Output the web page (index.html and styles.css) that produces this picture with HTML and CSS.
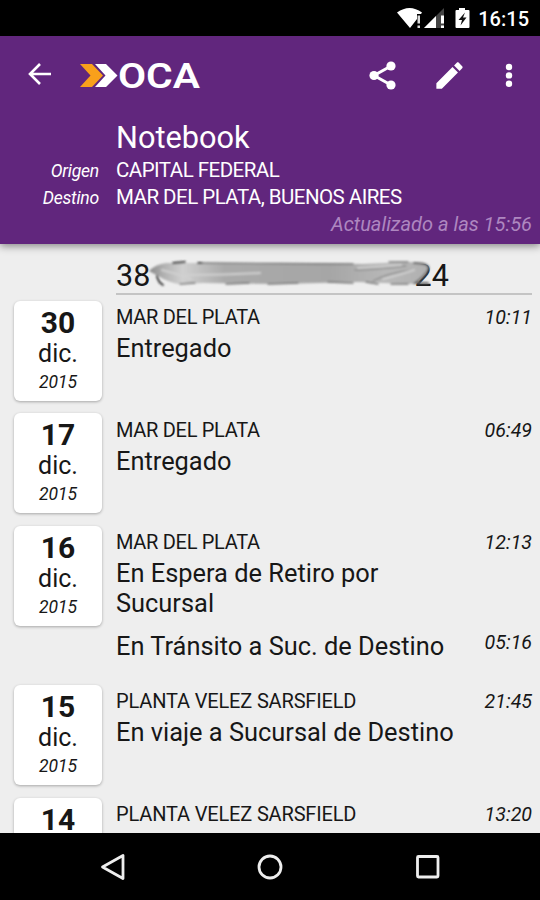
FILE: index.html
```html
<!DOCTYPE html>
<html lang="es">
<head>
<meta charset="utf-8">
<title>OCA</title>
<link rel="stylesheet" href="styles.css">
</head>
<body>
<div class="phone">
  <div class="status">
    <svg class="signals" width="76" height="36" viewBox="0 0 76 36">
      <path d="M0 12.500Q12.500 3.500 25 12.500L24 14H20V19L13 28Z" fill="#fff"/>
      <path d="M20.500 15.500h2.500v8h-2.500zM20.500 25.500h2.500v2.500h-2.500z" fill="#ddd"/>
      <path d="M27 28L47 8V28Z" fill="#444"/>
      <path d="M27 28L39 16V28Z" fill="#fff"/>
      <path d="M44 15.500h3v8h-3zM44 25.500h3v2.500h-3z" fill="#fff"/>
      <path d="M62 8h6v2h3.500q1 0 1 1v16q0 1-1 1h-12q-1 0-1-1V11q0-1 1-1H62Z" fill="#fff"/>
      <path d="M68 12.500L61.500 20H65L63.500 25.500L69.500 17.500H66Z" fill="#111"/>
    </svg>
    <span class="clock">16:15</span>
  </div>
  <header class="header">
    <div class="toolbar">
      <svg class="back" width="26" height="26" viewBox="0 0 26 26" fill="none" stroke="#fff" stroke-width="2.600"><path d="M25 13H4M14 3L4 13L14 23"/></svg>
      <svg class="logo" width="124" height="34" viewBox="0 0 124 34">
        <path d="M1 5H13L24 16.500L13 28H1L11.500 16.500Z" fill="#f9a01b"/>
        <path d="M16 5H27L38.500 16.500L27 28H16L26.500 16.500Z" fill="#fff"/>
        <text class="logo-text" x="39" y="29" textLength="82" lengthAdjust="spacingAndGlyphs">OCA</text>
      </svg>
      <svg class="share" width="30" height="32" viewBox="0 0 30 32"><path d="M23 6L6 15.500L23 25" fill="none" stroke="#fff" stroke-width="3"/><g fill="#fff"><circle cx="23" cy="6" r="4.600"/><circle cx="6" cy="15.500" r="4.600"/><circle cx="23" cy="25" r="4.600"/></g></svg>
      <svg class="edit" width="35" height="35" viewBox="0 0 24 24" fill="#fff"><path d="M3 17.250V21h3.750L17.810 9.940l-3.750-3.750L3 17.250zM20.710 7.040c.390-.390.390-1.020 0-1.410l-2.340-2.340c-.390-.390-1.020-.390-1.410 0l-1.830 1.830 3.750 3.750 1.830-1.830z"/></svg>
      <svg class="more" width="8" height="28" viewBox="0 0 8 28" fill="#fff"><circle cx="4" cy="5" r="3.200"/><circle cx="4" cy="13.400" r="3.200"/><circle cx="4" cy="21.800" r="3.200"/></svg>
    </div>
    <h1 class="title">Notebook</h1>
    <dl class="route">
      <dt>Origen</dt><dd>CAPITAL FEDERAL</dd>
      <dt>Destino</dt><dd>MAR DEL PLATA, BUENOS AIRES</dd>
    </dl>
    <div class="updated">Actualizado a las 15:56</div>
  </header>
  <main class="content">
    <div class="tracking">
      <span class="head">38</span>
      <svg class="redaction" width="286" height="32" viewBox="0 0 286 32">
        <defs>
          <filter id="soft" x="-5%" y="-20%" width="110%" height="140%"><feGaussianBlur stdDeviation="0.900"/></filter>
          <linearGradient id="smear"><stop offset="0" stop-color="#888"/><stop offset=".05" stop-color="#b0b0b0"/><stop offset=".12" stop-color="#d0d0d0"/><stop offset=".27" stop-color="#aaa"/><stop offset=".65" stop-color="#a6a6a6"/><stop offset=".85" stop-color="#b8b8b8"/><stop offset="1" stop-color="#b0b0b0"/></linearGradient>
        </defs>
        <g filter="url(#soft)" fill="none" stroke-linecap="round">
          <path d="M1 14Q8 7 18 6L70 6L150 6L215 7L260 5Q284 6 281 12Q277 24 262 27L210 25L130 27L55 26L30 27Q18 24 12 20Z" fill="url(#smear)"/>
          <path d="M9 19Q10 25 15 28M25 6L37 5M50 6L54 6" stroke="#333" stroke-width="1.800"/>
          <path d="M54 6L130 6.500L205 7M241 5L260 5M32 27L47 26M78 27L101 26M120 27L150 26M180 25L205 26M218 25L230 27M243 27L260 27" stroke="#777" stroke-width="1.300"/>
          <path d="M207 13Q235 12 258 9M225 24Q240 16 265 13" stroke="#909090" stroke-width="1.300"/>
          <path d="M14 13Q30 17 43 22M38 18Q78 18 112 16M210 11Q230 10 253 8M235 22Q250 18 266 13" stroke="#d0d0d0" stroke-width="2"/>
          <path d="M266 6Q283 6 280 13Q276 20 267 26H280" stroke="#666" stroke-width="1.900"/>
        </g>
      </svg>
      <span class="tail">24</span>
    </div>
    <section class="day">
      <div class="card"><b>30</b><span>dic.</span><i>2015</i></div>
      <div class="events"><div class="event"><div class="info"><div class="place">MAR DEL PLATA</div><div class="state">Entregado</div></div><time>10:11</time></div></div>
    </section>
    <section class="day">
      <div class="card"><b>17</b><span>dic.</span><i>2015</i></div>
      <div class="events"><div class="event"><div class="info"><div class="place">MAR DEL PLATA</div><div class="state">Entregado</div></div><time>06:49</time></div></div>
    </section>
    <section class="day">
      <div class="card"><b>16</b><span>dic.</span><i>2015</i></div>
      <div class="events">
        <div class="event"><div class="info"><div class="place">MAR DEL PLATA</div><div class="state">En Espera de Retiro por<br>Sucursal</div></div><time>12:13</time></div>
        <div class="event second"><div class="info"><div class="state">En Tránsito a Suc. de Destino</div></div><time>05:16</time></div>
      </div>
    </section>
    <section class="day">
      <div class="card"><b>15</b><span>dic.</span><i>2015</i></div>
      <div class="events"><div class="event"><div class="info"><div class="place wide">PLANTA VELEZ SARSFIELD</div><div class="state">En viaje a Sucursal de Destino</div></div><time>21:45</time></div></div>
    </section>
    <section class="day">
      <div class="card"><b>14</b></div>
      <div class="events"><div class="event"><div class="info"><div class="place wide">PLANTA VELEZ SARSFIELD</div></div><time>13:20</time></div></div>
    </section>
  </main>
  <nav class="nav">
    <svg width="28" height="28" viewBox="0 0 28 28"><path d="M4.500 14L25 2.500V25.500Z"/></svg>
    <svg width="28" height="28" viewBox="0 0 28 28"><circle cx="14" cy="14" r="11"/></svg>
    <svg width="28" height="28" viewBox="0 0 28 28"><rect x="3.500" y="3.500" width="20.500" height="20.500" rx="1"/></svg>
  </nav>
</div>
</body>
</html>
```
FILE: styles.css
```css
* { box-sizing: border-box; }
body { margin: 0; font-family: Roboto, "Liberation Sans", sans-serif; color: #171717; }
.phone { width: 540px; height: 900px; display: flex; flex-direction: column; overflow: hidden; background: #eee; }
.status { height: 36px; flex: none; background: #000; color: #fff; display: flex; justify-content: flex-end; align-items: center; padding-right: 11px; gap: 5px; }
.clock { font-size: 20px; font-weight: 500; line-height: 36px; padding-top: 2px; }
.header { height: 208px; flex: none; background: #61267d; color: #fff; box-shadow: 0 2px 8px rgba(0,0,0,.45); z-index: 1; }
.toolbar { height: 79px; display: flex; align-items: center; padding-left: 26px; }
.back { margin-top: -3px; }
.logo { margin-left: 27px; overflow: visible; }
.logo-text { font: 600 35px Roboto, sans-serif; fill: #fff; }
.share { margin-left: 165px; }
.edit { margin-left: 34px; }
.more { margin-left: 38px; }
.title { margin: 0; padding: 5px 0 0 116px; font-size: 30.700px; line-height: 36px; font-weight: 400; }
.route { margin: 0; display: grid; grid-template-columns: 99px 1fr; column-gap: 17px; line-height: 27px; padding-top: 1px; }
.route dt { text-align: right; font-size: 17.600px; font-style: italic; letter-spacing: -.25px; padding-top: 1px; line-height: 26px; }
.route dd { margin: 0; font-size: 20.500px; letter-spacing: -.52px; white-space: nowrap; }
.updated { text-align: right; padding-right: 8px; font-size: 20px; line-height: 26px; font-style: italic; color: #ae87c0; }
.content { flex: 1; min-height: 0; overflow: hidden; }
.tracking { margin: 12.100px 8px 0 116px; height: 39px; border-bottom: 2px solid #c4c4c4; font-size: 30.500px; line-height: 39px; display: flex; align-items: flex-start; }
.head { width: 34px; flex: none; }
.redaction { flex: none; margin: 1px -18px 0 -2px; z-index: 1; }
.tail { flex: none; margin-left: -1.500px; }
.day { display: grid; grid-template-columns: 88px 1fr; column-gap: 14px; padding: 0 8px 0 14px; margin-top: 6px; min-height: 106.500px; }
.card { height: 100px; margin-top: -.2px; background: #fff; border-radius: 6px; box-shadow: 0 1px 3px rgba(0,0,0,.3); display: flex; flex-direction: column; align-items: center; padding-top: 4px; }
.card b { font-size: 30px; line-height: 36px; }
.card span { font-size: 25px; line-height: 27px; margin-top: -1px; }
.card i { font-size: 17.500px; line-height: 27px; margin-top: 2px; }
.event { display: flex; justify-content: space-between; padding-top: 3px; }
.place { font-size: 20px; line-height: 27px; letter-spacing: -.3px; }
.place.wide { letter-spacing: -.16px; }
.state { font-size: 25.400px; line-height: 30px; padding-top: 2px; white-space: nowrap; }
.event time { font-size: 19.600px; line-height: 27px; font-style: italic; }
.event.second { padding-top: 10.800px; padding-bottom: 18.400px; }
.nav { height: 67px; flex: none; background: #000; display: flex; justify-content: space-between; align-items: center; padding: 0 98px; }
.nav svg { fill: none; stroke: #eee; stroke-width: 2.800; stroke-linejoin: round; }
```
